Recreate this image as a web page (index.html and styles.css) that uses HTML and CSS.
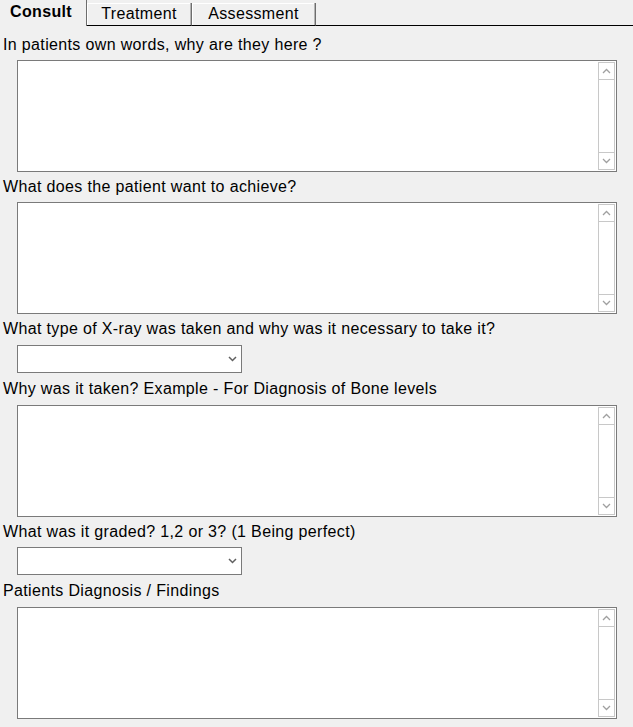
FILE: index.html
```html
<!DOCTYPE html>
<html>
<head>
<meta charset="utf-8">
<link rel="stylesheet" href="styles.css">
</head>
<body>
<div class="tabbar">
  <div class="tab active">Consult</div>
  <div class="tab t2">Treatment</div>
  <div class="tab t3">Assessment</div>
  <div class="fill"></div>
</div>
<div class="form">
  <div class="lbl first">In patients own words, why are they here ?</div>
  <div class="memo"><textarea></textarea><div class="sb"><div class="btn up"><svg width="9" height="6" viewBox="0 0 9 6"><path d="M1 5 L4.5 1.5 L8 5" fill="none" stroke="#a0a0a0" stroke-width="1.3"/></svg></div><div class="btn down"><svg width="9" height="6" viewBox="0 0 9 6"><path d="M1 1 L4.5 4.5 L8 1" fill="none" stroke="#a0a0a0" stroke-width="1.3"/></svg></div></div></div>
  <div class="lbl">What does the patient want to achieve?</div>
  <div class="memo"><textarea></textarea><div class="sb"><div class="btn up"><svg width="9" height="6" viewBox="0 0 9 6"><path d="M1 5 L4.5 1.5 L8 5" fill="none" stroke="#a0a0a0" stroke-width="1.3"/></svg></div><div class="btn down"><svg width="9" height="6" viewBox="0 0 9 6"><path d="M1 1 L4.5 4.5 L8 1" fill="none" stroke="#a0a0a0" stroke-width="1.3"/></svg></div></div></div>
  <div class="lbl l31">What type of X-ray was taken and why was it necessary to take it?</div>
  <div class="combo"><svg width="9" height="6" viewBox="0 0 9 6"><path d="M1 1 L4.5 4.5 L8 1" fill="none" stroke="#606060" stroke-width="1.5"/></svg></div>
  <div class="lbl l32">Why was it taken? Example - For Diagnosis of Bone levels</div>
  <div class="memo"><textarea></textarea><div class="sb"><div class="btn up"><svg width="9" height="6" viewBox="0 0 9 6"><path d="M1 5 L4.5 1.5 L8 5" fill="none" stroke="#a0a0a0" stroke-width="1.3"/></svg></div><div class="btn down"><svg width="9" height="6" viewBox="0 0 9 6"><path d="M1 1 L4.5 4.5 L8 1" fill="none" stroke="#a0a0a0" stroke-width="1.3"/></svg></div></div></div>
  <div class="lbl">What was it graded? 1,2 or 3? (1 Being perfect)</div>
  <div class="combo"><svg width="9" height="6" viewBox="0 0 9 6"><path d="M1 1 L4.5 4.5 L8 1" fill="none" stroke="#606060" stroke-width="1.5"/></svg></div>
  <div class="lbl l32">Patients Diagnosis / Findings</div>
  <div class="memo"><textarea></textarea><div class="sb"><div class="btn up"><svg width="9" height="6" viewBox="0 0 9 6"><path d="M1 5 L4.5 1.5 L8 5" fill="none" stroke="#a0a0a0" stroke-width="1.3"/></svg></div><div class="btn down"><svg width="9" height="6" viewBox="0 0 9 6"><path d="M1 1 L4.5 4.5 L8 1" fill="none" stroke="#a0a0a0" stroke-width="1.3"/></svg></div></div></div>
</div>
</body>
</html>
```
FILE: styles.css
```css
html, body {
  margin: 0;
  padding: 0;
  background: #f0f0f0;
  height: 100%;
  overflow: hidden;
}
body {
  font-family: "Liberation Sans", Arial, sans-serif;
  font-size: 16px;
  letter-spacing: 0.35px;
  color: #000;
}
.tabbar {
  display: flex;
  align-items: flex-end;
  height: 26px;
}
.tab {
  box-sizing: border-box;
  height: 23px;
  border-right: 1px solid #6d6d6d;
  border-bottom: 1px solid #000;
  box-shadow: inset -1px 0 #b4b4b4, inset 1px 1px #fff;
  text-align: center;
  line-height: 22px;
}
.tab.active {
  width: 87px;
  height: 26px;
  border-bottom: none;
  font-weight: bold;
  line-height: 24px;
  box-shadow: none;
  padding-right: 4px;
}
.tab.t2 { width: 105px; }
.tab.t3 { width: 124px; }
.fill {
  flex: 1;
  border-bottom: 1px solid #000;
}
.form {
  display: flex;
  flex-direction: column;
  align-items: flex-start;
}
.lbl {
  box-sizing: border-box;
  height: 30px;
  padding-left: 3px;
  padding-top: 6px;
  line-height: 18px;
  white-space: nowrap;
}
.lbl.first { height: 34px; padding-top: 10px; }
.lbl.l31 { height: 31px; padding-top: 6px; }
.lbl.l32 { height: 32px; padding-top: 7px; }
.memo {
  box-sizing: border-box;
  display: flex;
  margin-left: 17px;
  width: 600px;
  height: 112px;
  border: 1px solid #7a7a7a;
  background: #fff;
  padding: 1px;
}
.memo textarea {
  flex: 1;
  border: 0;
  resize: none;
  outline: none;
  margin: 0;
  background: #fff;
  font: inherit;
}
.sb {
  box-sizing: border-box;
  width: 17px;
  border: 1px solid #c8c8c8;
  display: flex;
  flex-direction: column;
  justify-content: space-between;
}
.btn {
  height: 16px;
  display: flex;
  align-items: center;
  justify-content: center;
}
.btn.up { border-bottom: 1px solid #c8c8c8; }
.btn.down { border-top: 1px solid #c8c8c8; }
.combo {
  box-sizing: border-box;
  margin-left: 17px;
  width: 225px;
  height: 28px;
  border: 1px solid #7a7a7a;
  background: #fff;
  display: flex;
  align-items: center;
  justify-content: flex-end;
  padding-right: 4px;
}
```
